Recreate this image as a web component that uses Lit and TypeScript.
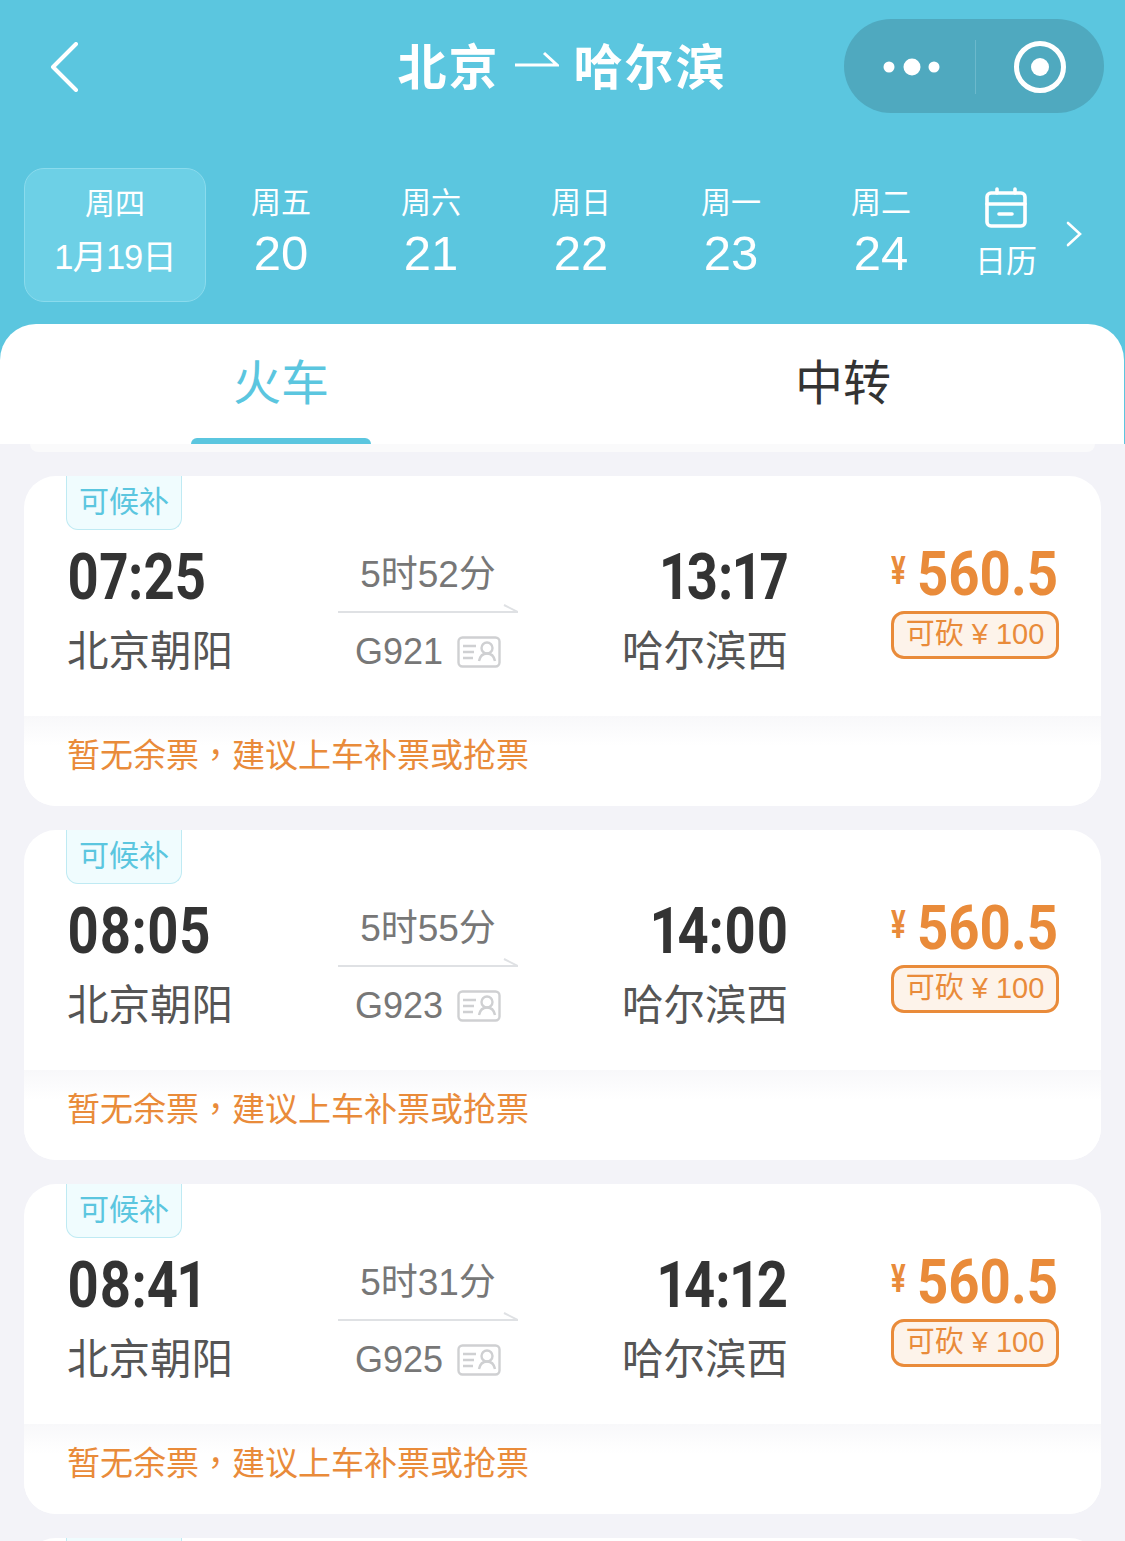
import { LitElement, html, css } from "lit";
import { customElement } from "lit/decorators.js";

const days = [
  ["周五", "20"],
  ["周六", "21"],
  ["周日", "22"],
  ["周一", "23"],
  ["周二", "24"],
];

const trains = [
  { dep: "07:25", arr: "13:17", dur: "5时52分", no: "G921" },
  { dep: "08:05", arr: "14:00", dur: "5时55分", no: "G923" },
  { dep: "08:41", arr: "14:12", dur: "5时31分", no: "G925" },
];

@customElement("app-root")
export class AppRoot extends LitElement {
  static styles = css`
    :host {
      display: block;
      width: 1125px;
      height: 1541px;
      overflow: hidden;
      background: #f3f3f8;
      font-family: "Liberation Sans", "Noto Sans CJK SC", sans-serif;
    }
    .header {
      background: #5bc6df;
      height: 444px;
      display: flex;
      flex-direction: column;
    }
    .nav {
      height: 168px;
      flex: none;
      display: flex;
      align-items: flex-start;
      padding: 19px 21px 0 50px;
      box-sizing: border-box;
    }
    .back {
      width: 30px;
      height: 50px;
      margin-top: 23px;
      flex: none;
    }
    .title {
      flex: 1;
      height: 88px;
      display: flex;
      align-items: center;
      justify-content: center;
      gap: 15px;
      color: #fff;
      font-size: 49px;
      font-weight: 700;
      letter-spacing: 2px;
      padding-left: 200px;
      box-sizing: border-box;
      font-family: "Noto Sans CJK SC", sans-serif;
    }
    .title svg {
      width: 44px;
      height: 16px;
      flex: none;
      margin-top: -8px;
    }
    .capsule {
      width: 260px;
      height: 94px;
      flex: none;
      border-radius: 47px;
      background: #4fa9bf;
      display: flex;
      align-items: center;
      padding-top: 2px;
      box-sizing: border-box;
    }
    .cap-left {
      width: 132px;
      height: 54px;
      padding-left: 5px;
      display: flex;
      align-items: center;
      justify-content: center;
      border-right: 1px solid #6cb9cc;
      box-sizing: border-box;
    }
    .cap-right {
      flex: 1;
      display: flex;
      justify-content: center;
    }
    .dates {
      height: 134px;
      flex: none;
      display: flex;
      padding-left: 24px;
    }
    .selected {
      width: 182px;
      box-sizing: border-box;
      background: #6dd0e6;
      border: 1px solid #8adbed;
      border-radius: 20px;
      color: #fff;
      display: flex;
      flex-direction: column;
      align-items: center;
    }
    .selected .day {
      margin-top: 12px;
      font-size: 34.5px;
      line-height: 46px;
      letter-spacing: -1px;
    }
    .date {
      width: 150px;
      color: #fff;
      display: flex;
      flex-direction: column;
      align-items: center;
    }
    .week {
      font-size: 30px;
      line-height: 36px;
      height: 36px;
      margin-top: 17px;
    }
    .num {
      font-size: 49px;
      line-height: 56px;
      margin-top: 4px;
    }
    .cal {
      width: 88px;
      margin-left: 6px;
      color: #fff;
      display: flex;
      flex-direction: column;
      align-items: center;
      font-size: 31px;
      line-height: 38px;
    }
    .cal svg {
      width: 42px;
      height: 42px;
      margin-top: 19px;
      margin-bottom: 14px;
    }
    .chev {
      width: 16px;
      height: 26px;
      margin: 53px 0 0 16px;
    }
    .tabs {
      flex: none;
      margin: 22px 1px 0 0;
      height: 120px;
      background: #fff;
      border-radius: 36px 36px 0 0;
      display: grid;
      grid-template-columns: 562px 1fr;
    }
    .tab {
      display: flex;
      flex-direction: column;
      align-items: center;
      font-size: 48px;
      line-height: 120px;
      height: 120px;
      color: #333;
    }
    .tab.on {
      color: #5bc6df;
    }
    .tab .text {
      height: 114px;
    }
    .bar {
      width: 180px;
      height: 6px;
      border-radius: 6px 6px 0 0;
      background: #5bc6df;
    }
    .shim {
      height: 8px;
      margin: 0 30px;
      background: #fafafb;
      border-radius: 0 0 20px 20px;
    }
    .list {
      padding: 24px 24px 0;
      display: flex;
      flex-direction: column;
      gap: 24px;
    }
    .card {
      height: 330px;
      flex: none;
      background: #fff;
      border-radius: 32px;
      overflow: hidden;
      display: flex;
      flex-direction: column;
    }
    .tag {
      width: 116px;
      height: 54px;
      margin-left: 42px;
      flex: none;
      box-sizing: border-box;
      background: #f0fcfe;
      border: 1px solid #bfeaf3;
      border-top: none;
      border-radius: 0 0 12px 12px;
      color: #5bc6df;
      font-size: 30px;
      line-height: 52px;
      text-align: center;
    }
    .main {
      height: 186px;
      flex: none;
      display: grid;
      grid-template-columns: 271px 180px 270px 1fr;
      padding-left: 43px;
    }
    .time {
      font-family: "Roboto", sans-serif;
      font-variant-numeric: proportional-nums;
      font-size: 64px;
      font-weight: 700;
      line-height: 70px;
      color: #333;
      height: 70px;
      margin-top: 13px;
      display: inline-block;
      transform: scaleX(0.85);
      transform-origin: left center;
    }
    .station {
      font-size: 41.5px;
      line-height: 50px;
      margin-top: 14px;
      color: #555;
    }
    .arr {
      text-align: right;
    }
    .arr .time {
      transform-origin: right center;
    }
    .mid {
      display: flex;
      flex-direction: column;
      align-items: center;
    }
    .dur {
      font-size: 37px;
      line-height: 44px;
      color: #777;
      margin-top: 23px;
    }
    .line {
      width: 180px;
      height: 10px;
      margin-top: 6px;
    }
    .no {
      display: flex;
      align-items: center;
      gap: 14px;
      font-size: 36px;
      line-height: 44px;
      color: #777;
      margin-top: 17px;
    }
    .no svg {
      width: 44px;
      height: 32px;
    }
    .price {
      display: flex;
      flex-direction: column;
      align-items: stretch;
      width: 168px;
      margin-left: 103px;
    }
    .amount {
      display: flex;
      align-items: center;
      gap: 9px;
      height: 70px;
      margin-top: 9px;
      color: #e98b3a;
      font-family: "Roboto", sans-serif;
      font-weight: 700;
    }
    .yen {
      font-size: 38px;
      line-height: 38px;
      width: 17px;
      margin-top: -6px;
      display: inline-block;
      transform: scaleX(0.72);
      transform-origin: left center;
    }
    .val {
      font-size: 62px;
      line-height: 70px;
      display: inline-block;
      transform: scaleX(0.88);
      transform-origin: left center;
    }
    .cut {
      box-sizing: border-box;
      height: 48px;
      margin-top: 2px;
      border: 3px solid #e98b3a;
      border-radius: 13px;
      background: #fdf3ea;
      color: #e98b3a;
      font-size: 29px;
      line-height: 40px;
      text-align: center;
      white-space: nowrap;
    }
    .foot {
      flex: 1;
      padding-left: 43px;
      background: linear-gradient(#f8f8fa, #fff 30px);
      color: #e98b3a;
      font-size: 33px;
      line-height: 74px;
    }
    .comma {
      font-family: "Noto Sans CJK TC", sans-serif;
    }
  `;

  private capsuleDots() {
    return html`<svg width="58" height="20" viewBox="0 0 58 20">
      <circle cx="6" cy="10" r="5.5" fill="#fff"></circle>
      <circle cx="29" cy="10" r="8.5" fill="#fff"></circle>
      <circle cx="51" cy="10" r="5.5" fill="#fff"></circle>
    </svg>`;
  }

  private card(t: { dep: string; arr: string; dur: string; no: string }) {
    return html`<div class="card">
      <div class="tag">可候补</div>
      <div class="main">
        <div>
          <div class="time">${t.dep}</div>
          <div class="station">北京朝阳</div>
        </div>
        <div class="mid">
          <div class="dur">${t.dur}</div>
          <svg class="line" viewBox="0 0 180 10">
            <path d="M0 9H180L166 2" fill="none" stroke="#dfe1e4" stroke-width="2"></path>
          </svg>
          <div class="no">
            <span>${t.no}</span>
            <svg viewBox="0 0 44 32" fill="none" stroke="#cfd0d2" stroke-width="2.4">
              <rect x="1.5" y="1.5" width="41" height="29" rx="4"></rect>
              <path d="M6 10H19M6 16H17M6 22H16"></path>
              <circle cx="30" cy="12" r="5.5"></circle>
              <path d="M22 25c1-5 4-7.500 8-7.500s7 2.500 8 7.500"></path>
            </svg>
          </div>
        </div>
        <div class="arr">
          <div class="time">${t.arr}</div>
          <div class="station">哈尔滨西</div>
        </div>
        <div class="price">
          <div class="amount"><span class="yen">¥</span><span class="val">560.5</span></div>
          <div class="cut">可砍 ¥ 100</div>
        </div>
      </div>
      <div class="foot">暂无余票<span class="comma">，</span>建议上车补票或抢票</div>
    </div>`;
  }

  render() {
    return html`
      <div class="header">
        <div class="nav">
          <svg class="back" viewBox="0 0 30 50" fill="none" stroke="#fff" stroke-width="4" stroke-linecap="round">
            <path d="M26 2L3 25L26 48" stroke-linejoin="round"></path>
          </svg>
          <div class="title">
            <span>北京</span>
            <svg viewBox="0 0 44 16" fill="none" stroke="#fff" stroke-width="3">
              <path d="M0 14H42L29 2"></path>
            </svg>
            <span>哈尔滨</span>
          </div>
          <div class="capsule">
            <div class="cap-left">${this.capsuleDots()}</div>
            <div class="cap-right">
              <svg width="54" height="54" viewBox="0 0 54 54">
                <circle cx="27" cy="27" r="23.500" fill="none" stroke="#fff" stroke-width="5"></circle>
                <circle cx="27" cy="27" r="9" fill="#fff"></circle>
              </svg>
            </div>
          </div>
        </div>
        <div class="dates">
          <div class="selected">
            <div class="week">周四</div>
            <div class="day">1月19日</div>
          </div>
          ${days.map(
            ([w, n]) => html`<div class="date">
              <div class="week">${w}</div>
              <div class="num">${n}</div>
            </div>`
          )}
          <div class="cal">
            <svg viewBox="0 0 42 42" fill="none" stroke="#fff" stroke-width="3.600" stroke-linecap="round" stroke-linejoin="round">
              <rect x="2" y="6" width="38" height="33" rx="4"></rect>
              <path d="M2 17H40M12 2V6M30 2V6M14 27H27"></path>
            </svg>
            <span>日历</span>
          </div>
          <svg class="chev" viewBox="0 0 16 26" fill="none" stroke="#fff" stroke-width="2.600" stroke-linecap="round">
            <path d="M2 2L14 13L2 24"></path>
          </svg>
        </div>
        <div class="tabs">
          <div class="tab on"><div class="text">火车</div><div class="bar"></div></div>
          <div class="tab"><div class="text">中转</div></div>
        </div>
      </div>
      <div class="shim"></div>
      <div class="list">
        ${trains.map((t) => this.card(t))}
        <div class="card"><div class="tag"></div></div>
      </div>
    `;
  }
}
